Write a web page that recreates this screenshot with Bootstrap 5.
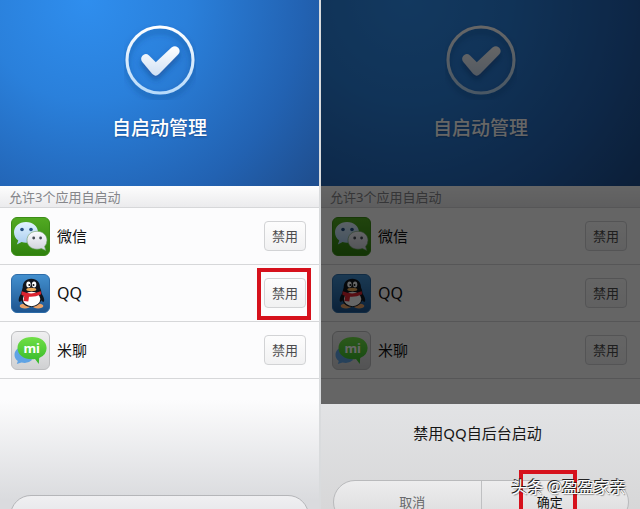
<!DOCTYPE html>
<html lang="zh-CN">
<head>
<meta charset="utf-8">
<meta name="viewport" content="width=device-width, initial-scale=1">
<title>自启动管理</title>
<link href="https://cdn.jsdelivr.net/npm/bootstrap@5.3.0/dist/css/bootstrap.min.css" rel="stylesheet">
<style>
body { font-family: "Noto Sans", "Noto Sans CJK SC", sans-serif; background: #d9dbdd; }
.screens { height: 100vh; gap: 2px; }
.phone { flex: 1 1 0; min-width: 0; background: linear-gradient(#fcfcfd 400px, #dadbde 500px); }
.hero { height: 186px; padding-top: 24px; background: radial-gradient(ellipse 290px 290px at 27% 0, #2f8eee 0, #2a80db 35%, #2262b2 75%, #1f4f90 100%); }
.hero svg { width: 72px; height: 76px; }
.hero h1 { font-size: 19px; line-height: 28px; margin: 14px 0 0; color: #fff; text-shadow: 0 1px 2px #123a7499; }
.count { height: 22px; padding-left: 9px; font-size: 13px; line-height: 22px; color: #85868a; background: linear-gradient(#fdfdfd, #ebebed); border-bottom: 1px solid #d6d7d9; }
.app { height: 57px; padding: 0 13px 0 11px; border-bottom: 1px solid #d6d7d9; }
.app svg { width: 39px; height: 39px; margin-right: 7px; }
.app-name { font-size: 15px; line-height: 24px; color: #111; }
.app-name.latin { font-size: 16px; }
.off { width: 42px; height: 30px; padding: 0; font-size: 13px; line-height: 20px; color: #4b4b4d; background: linear-gradient(#fdfdfd, #f1f1f2); border: 1px solid #d2d3d5; border-radius: 4px; }
.ring { border: 4px solid #d6111c; pointer-events: none; }
.ring-row { inset: -10px -5px -12px -7px; }
.bar { height: 42px; margin: 0 10px -28px; background: linear-gradient(#f0f0f2, #dcdde0); border: 1px solid #b5b6b9; border-radius: 21px; }
.dim { background: #0009; }
.sheet { height: 105px; background: linear-gradient(#e2e3e5, #d7d7d8); }
.sheet h2 { font-size: 15px; line-height: 24px; font-weight: 400; margin: 17px 6px 35px 0; color: #151515; }
.choice { height: 44px; margin: 0 11px 0 12px; background: linear-gradient(#ededee, #dadadb); border: 1px solid #b9babc; border-radius: 22px; }
.choice button { flex: 1 1 0; padding-top: 0; padding-bottom: 0; border: 0; background: none; font-size: 13px; line-height: 20px; color: #68696b; }
.choice button + button { border-left: 1px solid #bfc0c2; color: #111; }
.ring-ok { width: 58px; height: 44px; left: 198px; top: 66px; }
.credit { right: 14px; bottom: 10px; font-size: 16px; line-height: 24px; color: #fff; text-shadow: -1px -1px 0 #222, 0 -1px 0 #2228, 1px 1px 1px #2226; }
</style>
</head>
<body class="overflow-hidden">
<svg width="0" height="0" class="position-absolute" aria-hidden="true">
<defs>
<linearGradient id="gGreen" x2="0" y2="1"><stop stop-color="#52aa22"/><stop offset="1" stop-color="#2f810e"/></linearGradient>
<linearGradient id="gBlue" x2="0" y2="1"><stop stop-color="#4390cf"/><stop offset="1" stop-color="#1d548f"/></linearGradient>
<linearGradient id="gGrey" x2="0" y2="1"><stop stop-color="#f0f0f1"/><stop offset="1" stop-color="#cfd0d2"/></linearGradient>
<linearGradient id="gBubA" x2="0" y2="1"><stop stop-color="#e2f3ff"/><stop offset="1" stop-color="#a9cdf0"/></linearGradient>
<linearGradient id="gBubB" x2="0" y2="1"><stop stop-color="#fafaff"/><stop offset="1" stop-color="#cfd1da"/></linearGradient>
<linearGradient id="gMi" x2="0" y2="1"><stop stop-color="#70df46"/><stop offset="1" stop-color="#35b829"/></linearGradient>
<linearGradient id="gRing" x2="0" y2="1"><stop stop-color="#fff"/><stop offset="1" stop-color="#b7dafa"/></linearGradient>
<linearGradient id="gTick" x2="0" y2="1"><stop stop-color="#fff"/><stop offset="1" stop-color="#d0e0f4"/></linearGradient>
<filter id="soft" x="-30%" y="-30%" width="160%" height="170%"><feDropShadow dx="0" dy="4" stdDeviation="3" flood-color="#0b3474" flood-opacity=".5"/></filter>
</defs>
<symbol id="tick" viewBox="0 0 72 76">
<circle cx="36" cy="36" r="33" fill="none" stroke="url(#gRing)" stroke-width="3" filter="url(#soft)"/>
<path d="M19.4 31.8Q22.5 28.600 26 31.500L32.800 38.200L48.500 23.600Q52.500 20.800 55.500 24Q58 27.400 55 30.500L36.500 49.500Q32.800 53.600 29.200 49.800L19.200 37.800Q17 34.500 19.400 31.800Z" transform="translate(-1 0)" fill="url(#gTick)" filter="url(#soft)"/>
</symbol>
<symbol id="wechat" viewBox="0 0 39 39">
<rect x=".5" y=".5" width="38" height="38" rx="5.500" fill="url(#gGreen)" stroke="#3c8d18"/>
<path d="M15 5C8 5 3 9.500 3 15.300C3 18.700 4.600 21.700 7.300 23.600L5.800 27.500L10.600 25.100Q12.700 25.700 15 25.700C22 25.700 27 21.200 27 15.400S22 5 15 5Z" fill="url(#gBubA)"/>
<circle cx="11" cy="12.500" r="1.800" fill="#254f82"/><circle cx="20" cy="12.500" r="1.800" fill="#254f82"/>
<path d="M26 14.300C19.700 14.300 16 18.300 16 23.300S20 32.200 26 32.200Q28.300 32.200 30.400 31.500L34.800 33.500L33.600 29.500Q36 27 36 23.300C36 18.300 32 14.300 26 14.300Z" fill="url(#gBubB)" stroke="#6a9c62" stroke-width=".6"/>
<circle cx="22.700" cy="21" r="1.400" fill="#444a53"/><circle cx="29.600" cy="21" r="1.400" fill="#444a53"/>
</symbol>
<symbol id="penguin" viewBox="0 0 39 39">
<rect x=".5" y=".5" width="38" height="38" rx="5.500" fill="url(#gBlue)" stroke="#2c6ba8"/>
<path d="M12.500 17C8.500 20.500 7 25.500 8 27.500C9 28.500 11 26.500 12 25M28 17C32 20.500 34 25.500 33 27.500C32 28.500 30 26.500 29 25" fill="#10151d"/>
<ellipse cx="14" cy="32" rx="5.300" ry="2.500" fill="#e9a267"/><ellipse cx="27" cy="32" rx="5.300" ry="2.500" fill="#e9a267"/>
<path d="M20.300 4.700C14.600 4.700 11.700 8.300 11.700 13.500Q10 17.500 10.200 24C10.500 30 15 33 20.500 33S30.200 29.500 30.500 24Q31 17.500 29 13.500C29 8.300 26 4.700 20.300 4.700Z" fill="#11151c"/>
<ellipse cx="20.600" cy="25" rx="8.700" ry="7.200" fill="#fff"/>
<ellipse cx="17.500" cy="10.500" rx="2.200" ry="3" fill="#fff"/><ellipse cx="23.100" cy="10.500" rx="2.200" ry="3" fill="#fff"/>
<circle cx="18.300" cy="11" r="1" fill="#111"/><circle cx="22.500" cy="11" r="1" fill="#111"/>
<ellipse cx="20.300" cy="15.500" rx="5" ry="1.700" fill="#eeaa58"/>
<path d="M10.700 17.300Q20 21.500 29.700 17.300L30.200 20.300Q24 23.300 18 22.800L17.300 27.500L12.500 27L13.200 21.900L10.400 20.700Z" fill="#dc2430"/>
</symbol>
<symbol id="mitalk" viewBox="0 0 39 39">
<rect x=".5" y=".5" width="38" height="38" rx="5.500" fill="url(#gGrey)" stroke="#bdbec0"/>
<path d="M12 15C6.500 16.500 3.500 20 3.500 24Q3.500 27.500 6.800 30L5.800 33L10.500 31.500Q17 33 21 29Z" fill="#5fa3e4"/>
<path d="M21 6C12.200 6 6.500 10.600 6.500 17S12.500 28.300 21 28.300Q22.500 28.300 24 28.100L27.800 33L28.200 27Q35.600 24 35.600 17C35.600 10.600 29.800 6 21 6Z" fill="url(#gMi)"/>
<text x="20.700" y="22" text-anchor="middle" font-family="Noto Sans, sans-serif" font-weight="700" font-size="13" fill="#fff">mi</text>
</symbol>
</svg>

<main class="screens d-flex">
<section class="phone d-flex flex-column position-relative overflow-hidden">
<header class="hero text-center flex-shrink-0"><svg aria-hidden="true"><use href="#tick"/></svg><h1>自启动管理</h1></header>
<div class="count flex-shrink-0">允许3个应用自启动</div>
<ul class="list-unstyled mb-0">
<li class="app d-flex align-items-center"><svg aria-hidden="true"><use href="#wechat"/></svg><span class="app-name me-auto">微信</span><button type="button" class="off">禁用</button></li>
<li class="app d-flex align-items-center"><svg aria-hidden="true"><use href="#penguin"/></svg><span class="app-name latin me-auto">QQ</span><span class="d-flex position-relative"><button type="button" class="off">禁用</button><span class="ring ring-row position-absolute"></span></span></li>
<li class="app d-flex align-items-center"><svg aria-hidden="true"><use href="#mitalk"/></svg><span class="app-name me-auto">米聊</span><button type="button" class="off">禁用</button></li>
</ul>
<div class="bar mt-auto flex-shrink-0"></div>
</section>

<section class="phone d-flex flex-column position-relative overflow-hidden">
<header class="hero text-center flex-shrink-0"><svg aria-hidden="true"><use href="#tick"/></svg><h1>自启动管理</h1></header>
<div class="count flex-shrink-0">允许3个应用自启动</div>
<ul class="list-unstyled mb-0">
<li class="app d-flex align-items-center"><svg aria-hidden="true"><use href="#wechat"/></svg><span class="app-name me-auto">微信</span><button type="button" class="off">禁用</button></li>
<li class="app d-flex align-items-center"><svg aria-hidden="true"><use href="#penguin"/></svg><span class="app-name latin me-auto">QQ</span><button type="button" class="off">禁用</button></li>
<li class="app d-flex align-items-center"><svg aria-hidden="true"><use href="#mitalk"/></svg><span class="app-name me-auto">米聊</span><button type="button" class="off">禁用</button></li>
</ul>
<div class="position-absolute top-0 bottom-0 start-0 end-0 d-flex flex-column">
<div class="dim flex-grow-1"></div>
<div class="sheet position-relative overflow-hidden" role="dialog" aria-labelledby="ask">
<h2 id="ask" class="text-center">禁用QQ自后台启动</h2>
<div class="choice d-flex"><button type="button" class="ps-3">取消</button><button type="button" class="pe-3">确定</button></div>
<span class="ring ring-ok position-absolute"></span>
<span class="credit position-absolute text-nowrap">头条 @盈盈家亲</span>
</div>
</div>
</section>
</main>
<script src="https://cdn.jsdelivr.net/npm/bootstrap@5.3.0/dist/js/bootstrap.bundle.min.js"></script>
</body>
</html>
